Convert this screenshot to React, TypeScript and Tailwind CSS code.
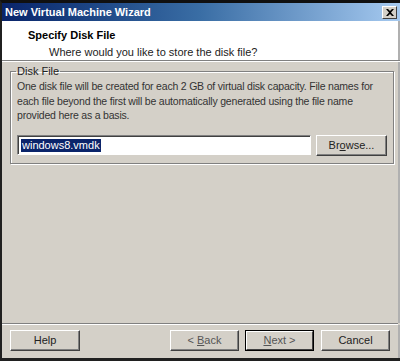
export default function App() {
  const btn =
    "h-[21px] bg-[#d4d0c8] border border-t-white border-l-white border-r-[#404040] border-b-[#404040] shadow-[inset_-1px_-1px_0_#808080] text-[11px] text-[#222] flex items-center justify-center"

  return (
    <div
      className="w-[400px] h-[361px] bg-[#d4d0c8] flex flex-col border-l-2 border-l-[#202020] border-b-[3px] border-b-[#202020] border-t-[3px] border-t-[#101010] overflow-hidden"
      style={{ fontFamily: '"Liberation Sans", Arial, sans-serif' }}
    >
      {/* title bar */}
      <div className="h-[18px] flex items-center justify-between pl-[3px] pr-[3px] bg-gradient-to-r from-[#0a246a] via-[#3a6ea5] to-[#a6caf0]">
        <span className="text-white text-[11px] font-bold">New Virtual Machine Wizard</span>
        <div className="w-[15px] h-[13px] bg-[#d4d0c8] border border-t-white border-l-white border-r-[#404040] border-b-[#404040] flex items-center justify-center">
          <svg width="8" height="7" viewBox="0 0 8 7">
            <path d="M0 0 L2 0 L4 2 L6 0 L8 0 L5 3.5 L8 7 L6 7 L4 5 L2 7 L0 7 L3 3.5 Z" fill="#000" />
          </svg>
        </div>
      </div>

      {/* header */}
      <div className="h-[39px] bg-white border-r-2 border-r-[#b0b0b0] pl-[26px] pt-[7px]">
        <div className="text-[11px] font-bold text-black leading-[14px]">Specify Disk File</div>
        <div className="text-[11px] text-[#222] leading-[14px] pl-[21px] mt-[3px]">Where would you like to store the disk file?</div>
      </div>
      <div className="h-[2px] border-t border-t-[#808080] border-b border-b-white" />

      {/* body */}
      <div className="flex-1 px-[8px] pt-[3px] border-r-2 border-r-[#b0b0b0]">
        <fieldset className="border border-[#808080] shadow-[inset_1px_1px_0_white,1px_1px_0_white] px-[6px] pb-[7px] pt-0 mr-[2px]">
          <legend className="text-[11px] text-[#222] px-[1px] leading-[13px] -ml-[1px]">Disk File</legend>
          <p className="text-[10.5px] text-[#333] leading-[14.5px] mt-[1px] whitespace-nowrap tracking-[-0.2px]">
            One disk file will be created for each 2 GB of virtual disk capacity. File names for
            <br />
            each file beyond the first will be automatically generated using the file name
            <br />
            provided here as a basis.
          </p>
          <div className="flex items-center mt-[12px] gap-[5px]">
            <div className="w-[294px] h-[20px] bg-white border border-t-[#808080] border-l-[#808080] border-r-white border-b-white shadow-[inset_1px_1px_0_#404040] flex items-center pl-[3px]">
              <span className="bg-[#0a246a] text-white text-[11px] leading-[13px] px-[1px]">windows8.vmdk</span>
            </div>
            <div className={btn + " w-[71px]"}>
              <span>
                Br<span className="underline">o</span>wse...
              </span>
            </div>
          </div>
        </fieldset>
      </div>

      {/* footer */}
      <div className="h-[2px] border-t border-t-[#808080] border-b border-b-white mr-[2px]" />
      <div className="h-[33px] flex items-center px-[8px] pb-[2px] border-r-2 border-r-[#b0b0b0]">
        <div className={btn + " w-[70px]"}>Help</div>
        <div className="flex-1" />
        <div className={btn + " w-[69px] text-[#555]"}>
          <span>
            &lt; <span className="underline">B</span>ack
          </span>
        </div>
        <div className="w-[69px] h-[21px] border border-black ml-[6px] flex">
          <div className="flex-1 bg-[#d4d0c8] border border-t-white border-l-white border-r-[#404040] border-b-[#404040] text-[11px] text-[#555] flex items-center justify-center">
            <span>
              <span className="underline">N</span>ext &gt;
            </span>
          </div>
        </div>
        <div className={btn + " w-[69px] ml-[7px]"}>Cancel</div>
      </div>
    </div>
  )
}
